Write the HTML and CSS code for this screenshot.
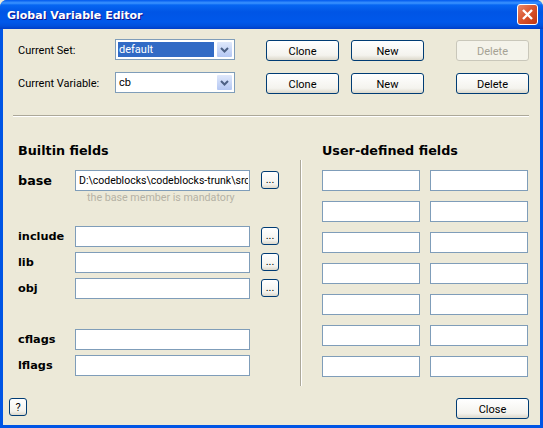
FILE: index.html
```html
<!DOCTYPE html>
<html lang="en">
<head>
    <meta charset="UTF-8">
    <title>Global Variable Editor</title>
    <link rel="stylesheet" href="styles.css">
</head>
<body>

<div class="window">
    <div class="titlebar">
        <span class="title">Global Variable Editor</span>
        <span class="close-x">
            <svg width="21" height="21" viewBox="0 0 21 21">
                <path d="M6 6 L15 15 M15 6 L6 15" stroke="#fff" stroke-width="2.4" fill="none"/>
            </svg>
        </span>
    </div>

    <div class="client">
        <div class="top-row">
            <label class="top-label">Current Set:</label>
            <div class="combo">
                <span class="combo-value selected">default</span>
                <span class="combo-arrow"><svg width="9" height="6" viewBox="0 0 9 6"><path d="M1 1 L4.5 4.5 L8 1" stroke="#4d6185" stroke-width="2" fill="none"/></svg></span>
            </div>
            <button class="btn first">Clone</button>
            <button class="btn mid">New</button>
            <button class="btn last" disabled>Delete</button>
        </div>
        <div class="top-row second">
            <label class="top-label">Current Variable:</label>
            <div class="combo">
                <span class="combo-value">cb</span>
                <span class="combo-arrow"><svg width="9" height="6" viewBox="0 0 9 6"><path d="M1 1 L4.5 4.5 L8 1" stroke="#4d6185" stroke-width="2" fill="none"/></svg></span>
            </div>
            <button class="btn first">Clone</button>
            <button class="btn mid">New</button>
            <button class="btn last">Delete</button>
        </div>

        <div class="separator"></div>

        <div class="fields">
            <div class="builtin">
                <h2>Builtin fields</h2>
                <div class="field-row">
                    <span class="field-label big">base</span>
                    <input type="text" class="text-input" value="D:\codeblocks\codeblocks-trunk\src">
                    <button class="btn browse">...</button>
                </div>
                <div class="hint">the base member is mandatory</div>

                <div class="group">
                    <div class="field-row">
                        <span class="field-label">include</span>
                        <input type="text" class="text-input">
                        <button class="btn browse">...</button>
                    </div>
                    <div class="field-row">
                        <span class="field-label">lib</span>
                        <input type="text" class="text-input">
                        <button class="btn browse">...</button>
                    </div>
                    <div class="field-row">
                        <span class="field-label">obj</span>
                        <input type="text" class="text-input">
                        <button class="btn browse">...</button>
                    </div>
                </div>

                <div class="group flags">
                    <div class="field-row">
                        <span class="field-label">cflags</span>
                        <input type="text" class="text-input">
                    </div>
                    <div class="field-row">
                        <span class="field-label">lflags</span>
                        <input type="text" class="text-input">
                    </div>
                </div>
            </div>

            <div class="divider"></div>

            <div class="user">
                <h2>User-defined fields</h2>
                <div class="user-grid">
                    <input type="text" class="text-input"><input type="text" class="text-input">
                    <input type="text" class="text-input"><input type="text" class="text-input">
                    <input type="text" class="text-input"><input type="text" class="text-input">
                    <input type="text" class="text-input"><input type="text" class="text-input">
                    <input type="text" class="text-input"><input type="text" class="text-input">
                    <input type="text" class="text-input"><input type="text" class="text-input">
                    <input type="text" class="text-input"><input type="text" class="text-input">
                </div>
            </div>
        </div>

        <div class="footer">
            <button class="btn help">?</button>
            <button class="btn close">Close</button>
        </div>
    </div>
</div>

</body>
</html>
```

FILE: styles.css
```css
* {
    box-sizing: border-box;
}

html, body {
    margin: 0;
    background-color: #ece9d8;
}

body {
    font-family: Roboto, sans-serif;
    font-size: 11px;
    color: #000;
}

.window {
    width: 543px;
    height: 428px;
    display: flex;
    flex-direction: column;
    overflow: hidden;
    background-color: #0055e5;
    border-radius: 7px 7px 0 0;
}

.titlebar {
    height: 29px;
    flex: none;
    display: flex;
    align-items: center;
    justify-content: space-between;
    padding: 0 5px 0 7px;
    background: linear-gradient(#0058ee 0, #3c95ff 3px, #0666f2 5px, #0055e5 12px, #0058ea 22px, #0050dc 26px, #003dc8 29px);
}

.title {
    padding-top: 2px;
    font-family: "DejaVu Sans", sans-serif;
    font-size: 11px;
    font-weight: bold;
    color: #fff;
    text-shadow: 1px 1px 0 #0f1089;
}

.close-x {
    width: 21px;
    height: 21px;
    display: block;
    border: 1px solid #fff;
    border-radius: 3px;
    background: linear-gradient(135deg, #e9886a, #d8532c 50%, #bf3612);
}

.close-x svg {
    display: block;
    margin: -1px;
}

.client {
    flex: 1;
    min-height: 0;
    margin: 0 3px 3px;
    padding: 10px 11px 0 15px;
    background-color: #ece9d8;
    display: flex;
    flex-direction: column;
}

.top-row {
    display: flex;
    align-items: flex-start;
    height: 22px;
}

.top-row.second {
    margin-top: 11px;
}

.top-label {
    width: 97px;
    line-height: 23px;
}

.combo {
    width: 120px;
    height: 21px;
    display: flex;
    padding: 2px;
    border: 1px solid #7f9db9;
    background-color: #fff;
}

.combo-value {
    flex: 1;
    padding-left: 1px;
    line-height: 15px;
}

.combo-value.selected {
    background-color: #316ac5;
    color: #fff;
    margin-right: 3px;
}

.combo-arrow {
    width: 15px;
    display: flex;
    align-items: center;
    justify-content: center;
    border-radius: 1px;
    background: linear-gradient(#dfe8fb, #b4c7f3);
}

.btn {
    height: 21px;
    padding: 1px 0 0;
    font-family: inherit;
    font-size: inherit;
    color: #000;
    border: 1px solid #003c74;
    border-radius: 3px;
    background: linear-gradient(#fff, #f4f3ee 75%, #dcd8cb);
}

.btn:disabled {
    color: #a5a294;
    border-color: #c9c7ba;
    background: #f4f3ea;
}

.top-row .btn {
    width: 73px;
    margin-top: 1px;
}

.top-row .first {
    margin-left: 31px;
}

.top-row .mid {
    margin-left: 12px;
}

.top-row .last {
    margin-left: 32px;
}

.separator {
    height: 2px;
    width: 516px;
    margin: 21px 0 0 -5px;
    background-color: #aca899;
    border-bottom: 1px solid #fff;
}

.fields {
    display: flex;
    margin-top: 23px;
    height: 258px;
}

h2 {
    margin: 0;
    font-family: "DejaVu Sans", sans-serif;
    font-size: 12.75px;
    line-height: 21px;
    font-weight: bold;
}

.builtin {
    width: 282px;
}

.field-row {
    display: flex;
    align-items: flex-start;
    height: 21px;
    margin-bottom: 5px;
}

.builtin h2 {
    margin-bottom: 9px;
}

.field-label {
    width: 57px;
    font-family: "DejaVu Sans", sans-serif;
    font-size: 11.3px;
    line-height: 21px;
    font-weight: bold;
}

.field-label.big {
    font-size: 12.75px;
}

.text-input {
    width: 175px;
    height: 21px;
    padding: 0 1px 0 3px;
    font-family: inherit;
    font-size: 10.5px;
    color: #000;
    border: 1px solid #7f9db9;
    background-color: #fff;
    outline: none;
}

.browse {
    width: 18px;
    height: 18px;
    margin: 1px 0 0 11px;
    padding: 0;
    line-height: 12px;
}

.hint {
    height: 18px;
    margin: -5px 0 0 69px;
    font-size: 10.7px;
    line-height: 14px;
    color: #b5b2a5;
}

.group {
    margin-top: 17px;
}

.group.flags {
    margin-top: 30px;
}

.divider {
    width: 2px;
    height: 226px;
    margin-top: 20px;
    background-color: #aca899;
    border-right: 1px solid #fff;
}

.user {
    margin-left: 20px;
}

.user h2 {
    margin-bottom: 9px;
}

.user-grid {
    display: grid;
    grid-template-columns: 98px 98px;
    grid-auto-rows: 21px;
    column-gap: 10px;
    row-gap: 10px;
}

.user-grid .text-input {
    width: 98px;
}

.footer {
    display: flex;
    justify-content: space-between;
    align-items: flex-start;
    margin-top: auto;
    margin-left: -9px;
    height: 27px;
}

.help {
    width: 18px;
    height: 18px;
}

.close {
    width: 73px;
}
```
